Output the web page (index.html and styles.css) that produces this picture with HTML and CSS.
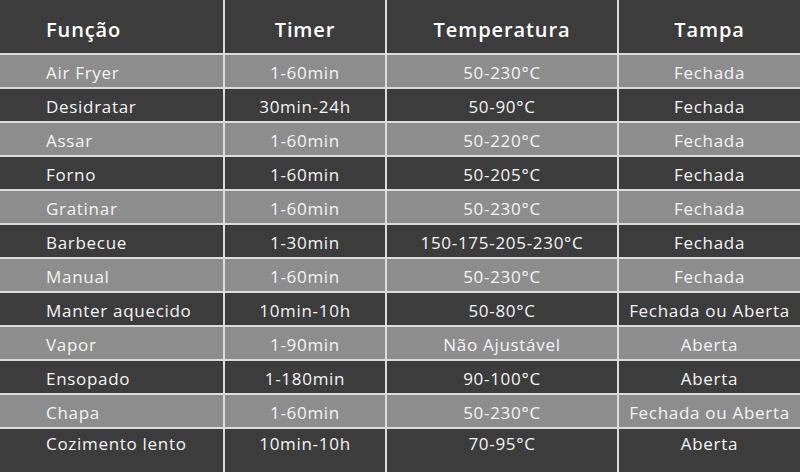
FILE: index.html
```html
<!DOCTYPE html>
<html lang="pt">
<head>
<meta charset="utf-8">
<title>Funções</title>
<link rel="stylesheet" href="styles.css">
</head>
<body>
<div class="table">
  <div class="cell head first">Função</div>
  <div class="cell head">Timer</div>
  <div class="cell head">Temperatura</div>
  <div class="cell head">Tampa</div>

  <div class="cell light first">Air Fryer</div>
  <div class="cell light">1-60min</div>
  <div class="cell light">50-230°C</div>
  <div class="cell light">Fechada</div>

  <div class="cell dark first">Desidratar</div>
  <div class="cell dark">30min-24h</div>
  <div class="cell dark">50-90°C</div>
  <div class="cell dark">Fechada</div>

  <div class="cell light first">Assar</div>
  <div class="cell light">1-60min</div>
  <div class="cell light">50-220°C</div>
  <div class="cell light">Fechada</div>

  <div class="cell dark first">Forno</div>
  <div class="cell dark">1-60min</div>
  <div class="cell dark">50-205°C</div>
  <div class="cell dark">Fechada</div>

  <div class="cell light first">Gratinar</div>
  <div class="cell light">1-60min</div>
  <div class="cell light">50-230°C</div>
  <div class="cell light">Fechada</div>

  <div class="cell dark first">Barbecue</div>
  <div class="cell dark">1-30min</div>
  <div class="cell dark">150-175-205-230°C</div>
  <div class="cell dark">Fechada</div>

  <div class="cell light first">Manual</div>
  <div class="cell light">1-60min</div>
  <div class="cell light">50-230°C</div>
  <div class="cell light">Fechada</div>

  <div class="cell dark first">Manter aquecido</div>
  <div class="cell dark">10min-10h</div>
  <div class="cell dark">50-80°C</div>
  <div class="cell dark">Fechada ou Aberta</div>

  <div class="cell light first">Vapor</div>
  <div class="cell light">1-90min</div>
  <div class="cell light">Não Ajustável</div>
  <div class="cell light">Aberta</div>

  <div class="cell dark first">Ensopado</div>
  <div class="cell dark">1-180min</div>
  <div class="cell dark">90-100°C</div>
  <div class="cell dark">Aberta</div>

  <div class="cell light first">Chapa</div>
  <div class="cell light">1-60min</div>
  <div class="cell light">50-230°C</div>
  <div class="cell light">Fechada ou Aberta</div>

  <div class="cell dark first last">Cozimento lento</div>
  <div class="cell dark last">10min-10h</div>
  <div class="cell dark last">70-95°C</div>
  <div class="cell dark last">Aberta</div>
</div>
</body>
</html>
```

FILE: styles.css
```css
html, body {
  margin: 0;
  padding: 0;
  background: #3c3c3c;
}
body {
  width: 800px;
  height: 472px;
  overflow: hidden;
  font-family: "Open Sans", "Liberation Sans", sans-serif;
}
.table {
  display: grid;
  grid-template-columns: 223px 160px 230px 1fr;
  grid-template-rows: 53px repeat(11, 32px) 44px;
  gap: 2px;
  background: #dcdcdc;
}
.cell {
  display: flex;
  align-items: center;
  justify-content: center;
  color: #f4f4f4;
  font-size: 17px;
  letter-spacing: 0.7px;
  white-space: nowrap;
  padding-top: 2px;
}
.cell.first {
  justify-content: flex-start;
  padding-left: 46px;
}
.head {
  background: #3c3c3c;
  color: #ffffff;
  font-size: 20px;
  font-weight: 600;
  letter-spacing: 0.9px;
  padding-top: 6px;
}
.light {
  background: #8d8d8d;
}
.dark {
  background: #3c3c3c;
}
.last {
  align-items: flex-start;
  padding-top: 3px;
}
```
